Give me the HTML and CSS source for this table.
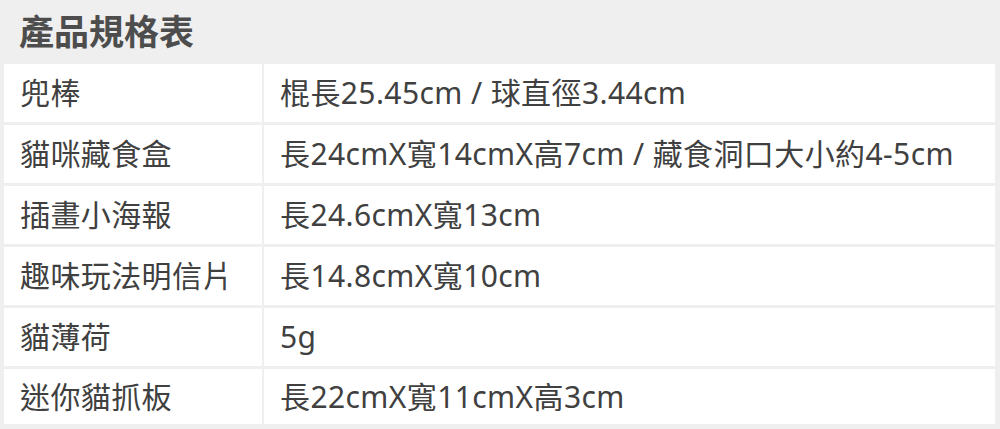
FILE: index.html
```html
<!DOCTYPE html>
<html lang="zh-Hant">
<head>
<meta charset="utf-8">
<title>產品規格表</title>
<link rel="stylesheet" href="styles.css">
</head>
<body>
<div class="page">
  <h1 class="title">產品規格表</h1>
  <div class="spec">
    <div class="cell name">兜棒</div>
    <div class="cell value">棍長25.45cm / 球直徑3.44cm</div>
    <div class="cell name">貓咪藏食盒</div>
    <div class="cell value">長24cmX寬14cmX高7cm / 藏食洞口大小約4-5cm</div>
    <div class="cell name">插畫小海報</div>
    <div class="cell value">長24.6cmX寬13cm</div>
    <div class="cell name">趣味玩法明信片</div>
    <div class="cell value">長14.8cmX寬10cm</div>
    <div class="cell name">貓薄荷</div>
    <div class="cell value">5g</div>
    <div class="cell name last">迷你貓抓板</div>
    <div class="cell value last">長22cmX寬11cmX高3cm</div>
  </div>
</div>
</body>
</html>
```

FILE: styles.css
```css
html, body {
  margin: 0;
  padding: 0;
  background: #efefef;
}
body {
  font-family: "Noto Sans", "Noto Sans CJK TC", sans-serif;
  color: #404040;
}
.page {
  width: 1000px;
  height: 429px;
  overflow: hidden;
}
.title {
  margin: 0;
  height: 64px;
  line-height: 64px;
  padding-left: 19px;
  font-size: 35px;
  font-weight: 700;
  color: #4d4d4d;
}
.spec {
  margin-left: 4px;
  width: 991px;
  display: grid;
  grid-template-columns: 258px 1fr;
  column-gap: 2px;
  row-gap: 3px;
  grid-auto-rows: 58px;
}
.cell {
  background: #fff;
  font-size: 30px;
  letter-spacing: 0.4px;
  line-height: 58px;
  padding-left: 16px;
  white-space: nowrap;
}
.cell.last {
  height: 55px;
  line-height: 55px;
}
```
